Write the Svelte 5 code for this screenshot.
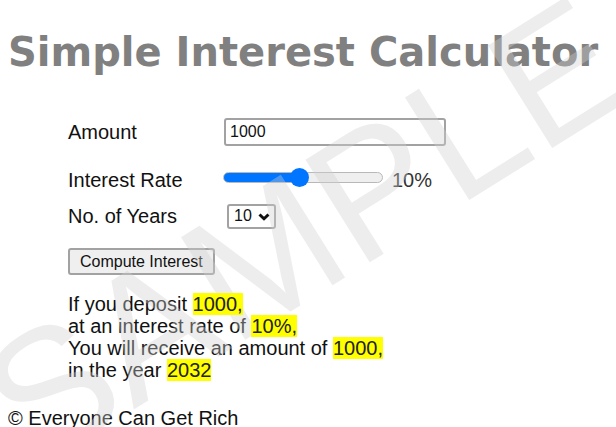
<script>
  let amount = $state(1000);
  let rate = $state(10);
  let years = $state('10');
  const yearOptions = ['1', '2', '3', '4', '5', '6', '7', '8', '9', '10'];
  let result = $state({ deposit: 1000, rate: 10, amount: 1000, year: 2032 });

  function compute(event) {
    event.preventDefault();
    const principal = Number(amount);
    result = {
      deposit: principal,
      rate,
      amount: (principal * Number(years) * rate) / 100,
      year: 2022 + Number(years)
    };
  }
</script>

<main>
  <h1>Simple Interest Calculator</h1>

  <form onsubmit={compute}>
    <div class="row amount">
      <label for="amount">Amount</label>
      <input id="amount" type="text" inputmode="numeric" bind:value={amount} />
    </div>
    <div class="row rate">
      <label for="rate">Interest Rate</label>
      <input
        id="rate"
        type="range"
        min="1"
        max="20"
        bind:value={rate}
        style="--fill: {((rate - 1) / 19) * 100}%"
      />
      <output for="rate">{rate}%</output>
    </div>
    <div class="row years">
      <label for="years">No. of Years</label>
      <span class="select">
        <select id="years" bind:value={years}>
          {#each yearOptions as option}
            <option value={option}>{option}</option>
          {/each}
        </select>
        <svg viewBox="0 0 12 8" aria-hidden="true"><path d="M1.5 1.5 6 5.8 10.5 1.5" /></svg>
      </span>
    </div>
    <button type="submit">Compute Interest</button>
  </form>

  <p class="result">
    If you deposit <mark>{result.deposit},</mark><br />
    at an interest rate of <mark>{result.rate}%,</mark><br />
    You will receive an amount of <mark>{result.amount},</mark><br />
    in the year <mark>{result.year}</mark>
  </p>

  <footer>© Everyone Can Get Rich</footer>

  <svg class="watermark" aria-hidden="true">
    <text transform="translate(34 472) rotate(-32)">SAMPLE</text>
  </svg>
</main>

<style>
  :global(body) {
    margin: 0;
    background: #fff;
  }

  main {
    position: relative;
    box-sizing: border-box;
    min-height: 100vh;
    overflow: hidden;
    padding: 28px 8px 0;
    font: 20px/22px 'Liberation Sans', Arial, sans-serif;
    color: #111;
  }

  h1 {
    margin: 0 0 42px;
    font: bold 40px/48px 'DejaVu Sans', Verdana, sans-serif;
    color: #808080;
    white-space: nowrap;
  }

  form {
    padding-left: 60px;
  }

  .row {
    display: flex;
    align-items: center;
    height: 28px;
  }

  .amount {
    margin-bottom: 20px;
  }

  .rate {
    margin-bottom: 8px;
  }

  .years {
    margin-bottom: 18px;
  }

  label {
    width: 156px;
    flex: none;
  }

  input,
  select,
  button {
    box-sizing: border-box;
    margin: 0;
    border: 2px solid #a2a2a2;
    border-radius: 3px;
    font: 16px/20px 'Liberation Sans', Arial, sans-serif;
    color: #111;
  }

  input[type='text'] {
    width: 222px;
    height: 28px;
    padding: 0 4px;
    background: #fff;
  }

  input[type='range'] {
    appearance: none;
    width: 160px;
    height: 20px;
    margin: -6px 0 0 -1px;
    border: 0;
    background: none;
  }

  input[type='range']::-webkit-slider-runnable-track {
    box-sizing: border-box;
    height: 11px;
    border: 1px solid #b8b8b8;
    border-radius: 6px;
    background: linear-gradient(to right, #0075ff var(--fill), #efefef var(--fill)) border-box;
  }

  input[type='range']::-webkit-slider-thumb {
    appearance: none;
    width: 19px;
    height: 19px;
    margin-top: -5px;
    border-radius: 50%;
    background: #0075ff;
  }

  output {
    margin-left: 9px;
    color: #333;
  }

  .select {
    position: relative;
    margin-left: 3px;
  }

  .select svg {
    position: absolute;
    right: 6px;
    top: 9px;
    width: 12px;
    height: 8px;
    fill: none;
    stroke: #111;
    stroke-width: 3;
    pointer-events: none;
  }

  select {
    display: block;
    appearance: none;
    width: 49px;
    height: 25px;
    padding: 0 0 0 5px;
    background: #fff;
  }

  button {
    display: block;
    height: 27px;
    padding: 0 10px;
    background: #efefef;
  }

  .result {
    margin: 18px 0 26px;
    padding-left: 60px;
    white-space: nowrap;
  }

  mark {
    position: relative;
    z-index: 1;
    background: #ff0;
    color: #222;
  }

  .watermark {
    position: absolute;
    inset: 0;
    width: 100%;
    height: 100%;
    pointer-events: none;
  }

  .watermark text {
    font: 176px 'Liberation Sans', Arial, sans-serif;
    fill: #d0d0d0;
    fill-opacity: 0.38;
  }
</style>
